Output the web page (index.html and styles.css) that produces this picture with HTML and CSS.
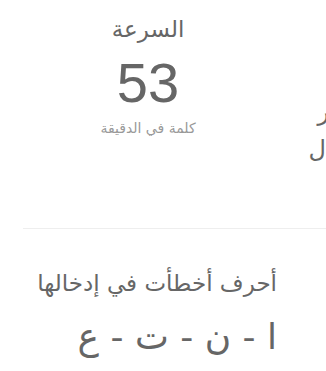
FILE: index.html
```html
<!DOCTYPE html>
<html lang="ar" dir="rtl">
<head>
    <meta charset="UTF-8">
    <meta name="viewport" content="width=device-width, initial-scale=1.0">
    <title>نتيجة الاختبار</title>
    <link rel="stylesheet" href="styles.css">
</head>
<body>
    <div class="stats">
        <div class="stat speed">
            <div class="stat_title">السرعة</div>
            <div class="stat_value">53</div>
            <div class="stat_unit">كلمة في الدقيقة</div>
        </div>
        <div class="stat next">
            <div class="next_line">ر</div>
            <div class="next_line">ل</div>
        </div>
    </div>

    <hr class="divider">

    <div class="mistakes">
        <h3 class="mistakes_title">أحرف أخطأت في إدخالها</h3>
        <div class="mistakes_list">ا - ن - ت - ع</div>
    </div>
</body>
</html>
```

FILE: styles.css
```css
html, body {
    margin: 0;
    padding: 0;
    overflow: hidden;
}

body {
    font-family: "DejaVu Sans", sans-serif;
    color: #666;
    background-color: #fff;
}

.stats {
    display: flex;
    direction: ltr;
    padding-top: 14px;
    height: 214px;
}

.stat {
    direction: rtl;
    flex-shrink: 0;
}

.speed {
    width: 296px;
    text-align: center;
}

.stat_title {
    font-size: 23px;
    line-height: 30px;
}

.stat_value {
    font-family: "Liberation Sans", Arial, sans-serif;
    font-size: 56px;
    line-height: 64px;
    margin-top: 7px;
}

.stat_unit {
    font-size: 14px;
    color: #999;
    line-height: 20px;
    margin-top: 3px;
}

.next {
    width: 28px;
    margin-left: 2px;
    text-align: right;
    padding-top: 80px;
}

.next_line {
    font-size: 24px;
    line-height: 37px;
}

.next_line:first-child {
    padding-right: 0;
    margin-right: -3px;
}

.divider {
    border: none;
    border-top: 1px solid #eee;
    margin: 0 0 0 23px;
}

.mistakes {
    padding: 36px 49px 0 0;
}

.mistakes_title {
    margin: 0;
    font-size: 23px;
    font-weight: normal;
    line-height: 36px;
}

.mistakes_list {
    margin-top: 12px;
    font-size: 36px;
    line-height: 48px;
}
```
